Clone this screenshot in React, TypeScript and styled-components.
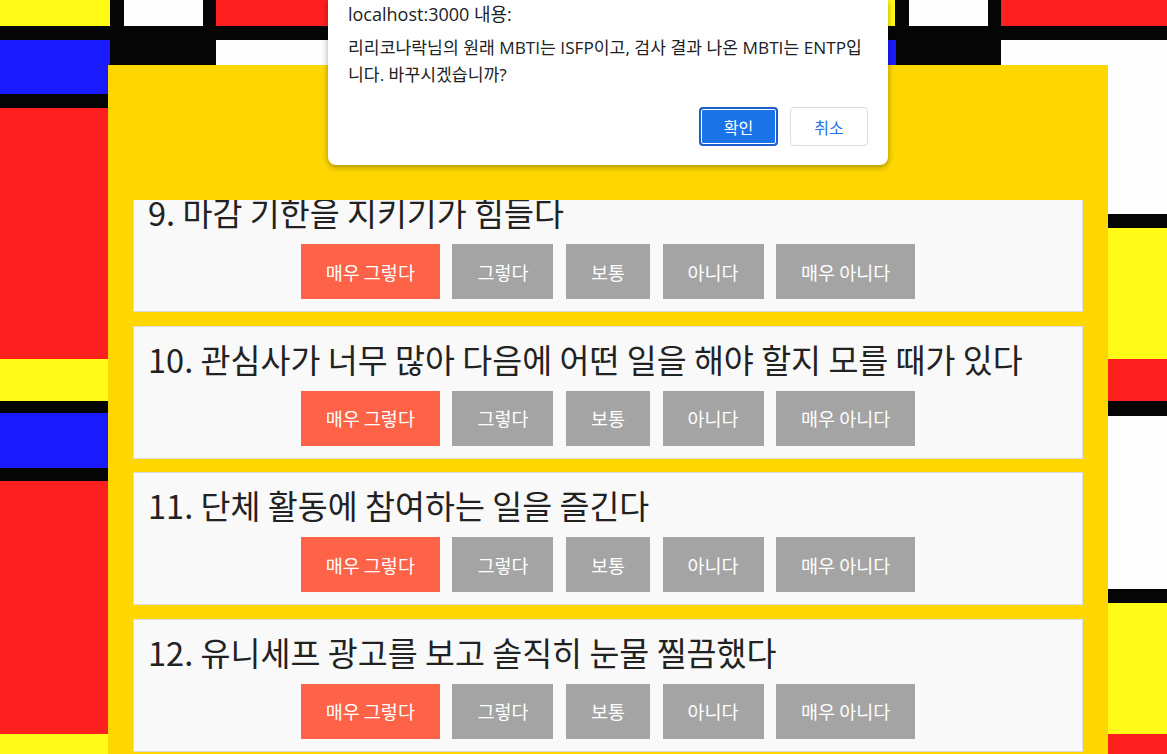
import React from "react"
import styled, { createGlobalStyle } from "styled-components"

const GlobalStyle = createGlobalStyle`
  html,
  body {
    margin: 0;
    padding: 0;
  }

  body {
    font-family: "Noto Sans CJK KR", "Noto Sans", sans-serif;
    overflow: hidden;
    background: #fff;
  }
`

const StyledPage = styled.div`
  position: relative;
  width: 1167px;
  height: 754px;
  overflow: hidden;
  padding-top: 65px;
  box-sizing: border-box;
`

const Backdrop = styled.svg`
  position: absolute;
  left: 0;
  top: 0;
  z-index: 0;
`

const Panel = styled.main`
  position: relative;
  z-index: 1;
  margin-left: 108px;
  width: 1000px;
  height: 689px;
  background: #ffd700;
  padding: 0 25px;
  box-sizing: border-box;
  display: flex;
  flex-direction: column;
`

const PanelHeader = styled.div`
  height: 135px;
  flex-shrink: 0;
`

const Viewport = styled.section`
  flex: 1;
  overflow: hidden;
`

const QuestionList = styled.div`
  display: flex;
  flex-direction: column;
  gap: 13.5px;
  margin-top: -21px;
`

const Card = styled.article`
  background: #f9f9f9;
  border: 1px solid #dcdcdc;
  padding: 10px 14px 12px;
  display: flex;
  flex-direction: column;
  gap: 10px;
`

const Title = styled.h2`
  margin: 0;
  font-size: 32.6px;
  line-height: 44px;
  font-weight: 400;
  color: #222;
  white-space: nowrap;
`

const Choices = styled.div`
  display: flex;
  justify-content: center;
  gap: 12.5px;
`

const ChoiceButton = styled.button<{ $active: boolean }>`
  height: 55px;
  padding: 0 25px;
  border: none;
  background: ${({ $active }) => ($active ? "#ff6347" : "#a4a4a4")};
  color: #fff;
  font-family: "Noto Sans CJK KR", sans-serif;
  font-size: 18.5px;
  white-space: nowrap;
  cursor: pointer;
`

// browser confirm() dialog lying over the page
const Dialog = styled.div`
  position: absolute;
  z-index: 5;
  left: 328px;
  top: 0;
  width: 560px;
  height: 165px;
  box-sizing: border-box;
  background: #fff;
  border-radius: 0 0 8px 8px;
  box-shadow: 0 2px 6px rgba(0, 0, 0, 0.35);
  padding: 3px 20px 19px;
  display: flex;
  flex-direction: column;
  font-family: "Open Sans", "Noto Sans CJK KR", sans-serif;
  color: #202124;
`

const DialogTitle = styled.div`
  font-size: 18px;
  line-height: 22px;
`

const DialogMessage = styled.p`
  margin: 9px 0 0;
  font-size: 17.2px;
  line-height: 27px;
  color: #202124;
`

const DialogActions = styled.div`
  margin-top: auto;
  display: flex;
  justify-content: flex-end;
  gap: 12px;
`

const DialogButton = styled.button<{ $primary?: boolean }>`
  width: ${({ $primary }) => ($primary ? "79px" : "78px")};
  height: 39px;
  border-radius: 4px;
  font-family: "Noto Sans CJK KR", sans-serif;
  font-size: 16px;
  cursor: pointer;
  border: ${({ $primary }) => ($primary ? "2px solid #1a5fcc" : "1px solid #dadce0")};
  background: ${({ $primary }) => ($primary ? "#1a73e8" : "#fff")};
  color: ${({ $primary }) => ($primary ? "#fff" : "#1a73e8")};
  box-shadow: ${({ $primary }) => ($primary ? "inset 0 0 0 1px #fff" : "none")};
`

const YELLOW = "#fffb17"
const RED = "#fe1f1f"
const BLUE = "#1a1afe"
const WHITE = "#fdfdfd"

// mondrian blocks: x, y, w, h, colour (gaps show the black ground)
const BLOCKS: [number, number, number, number, string][] = [
  [0, 0, 110, 26, YELLOW],
  [124, 0, 79, 26, WHITE],
  [216, 0, 640, 26, RED],
  [866, 0, 29, 26, YELLOW],
  [909, 0, 79, 26, WHITE],
  [1001, 0, 166, 26, RED],
  [0, 40, 110, 54, BLUE],
  [216, 40, 640, 25, WHITE],
  [866, 40, 30, 25, BLUE],
  [1001, 40, 166, 174, WHITE],
  [0, 108, 108, 251, RED],
  [0, 359, 108, 42, YELLOW],
  [0, 413, 108, 55, BLUE],
  [0, 481, 108, 253, RED],
  [0, 734, 108, 20, YELLOW],
  [1108, 228, 59, 131, YELLOW],
  [1108, 359, 59, 42, RED],
  [1108, 416, 59, 173, WHITE],
  [1108, 603, 59, 131, YELLOW],
  [1108, 734, 59, 20, RED],
]

const QUESTIONS = [
  { no: 9, text: "마감 기한을 지키기가 힘들다" },
  { no: 10, text: "관심사가 너무 많아 다음에 어떤 일을 해야 할지 모를 때가 있다" },
  { no: 11, text: "단체 활동에 참여하는 일을 즐긴다" },
  { no: 12, text: "유니세프 광고를 보고 솔직히 눈물 찔끔했다" },
]

const CHOICES = ["매우 그렇다", "그렇다", "보통", "아니다", "매우 아니다"]

const App = () => {
  return (
    <StyledPage>
      <GlobalStyle />
      <Backdrop width={1167} height={754} viewBox="0 0 1167 754">
        <rect width={1167} height={754} fill="#050505" />
        {BLOCKS.map(([x, y, w, h, c], i) => (
          <rect key={i} x={x} y={y} width={w} height={h} fill={c} />
        ))}
      </Backdrop>

      <Panel>
        <PanelHeader />
        <Viewport>
          <QuestionList>
            {QUESTIONS.map((q) => (
              <Card key={q.no}>
                <Title>
                  {q.no}. {q.text}
                </Title>
                <Choices>
                  {CHOICES.map((label, i) => (
                    <ChoiceButton key={label} $active={i === 0}>
                      {label}
                    </ChoiceButton>
                  ))}
                </Choices>
              </Card>
            ))}
          </QuestionList>
        </Viewport>
      </Panel>

      <Dialog role="alertdialog">
        <DialogTitle>localhost:3000 내용:</DialogTitle>
        <DialogMessage>
          리리코나락님의 원래 MBTI는 ISFP이고, 검사 결과 나온 MBTI는 ENTP입
          <br />
          니다. 바꾸시겠습니까?
        </DialogMessage>
        <DialogActions>
          <DialogButton $primary>확인</DialogButton>
          <DialogButton>취소</DialogButton>
        </DialogActions>
      </Dialog>
    </StyledPage>
  )
}

export default App
